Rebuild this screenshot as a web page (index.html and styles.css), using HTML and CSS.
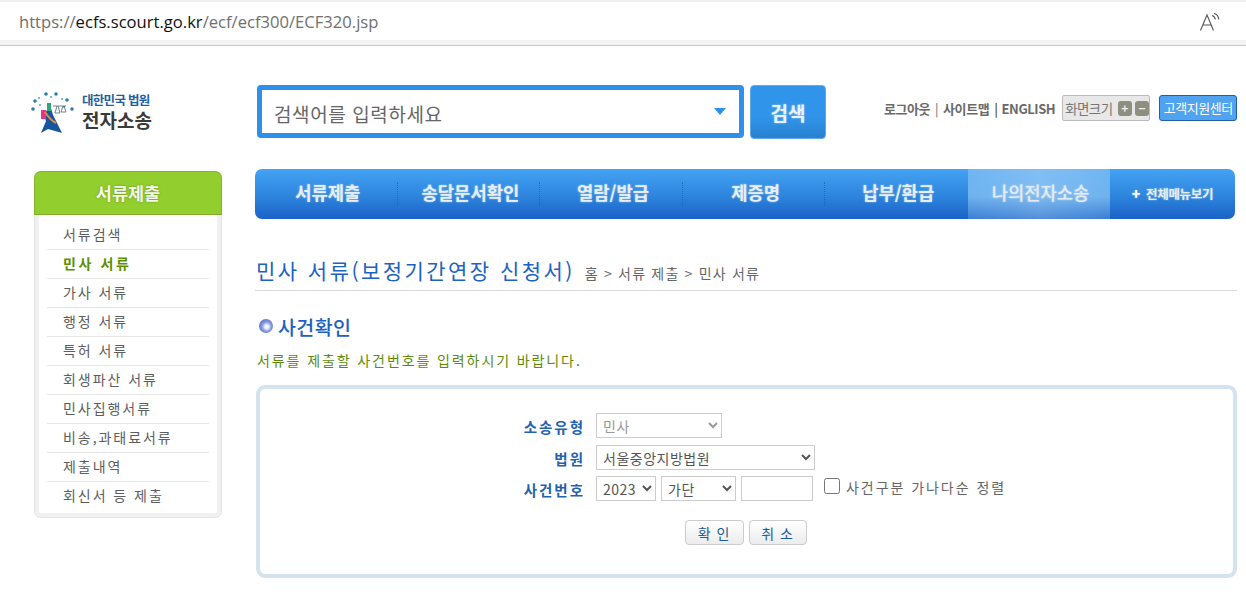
FILE: index.html
```html
<!DOCTYPE html>
<html lang="ko">
<head>
<meta charset="utf-8">
<title>전자소송</title>
<link rel="stylesheet" href="styles.css">
</head>
<body>
<div class="urlbar">
  <div class="url"><span class="dim">https://</span>ecfs.scourt.go.kr<span class="dim">/ecf/ecf300/ECF320.jsp</span></div>
  <svg class="read" width="22" height="20" viewBox="0 0 22 20" fill="none" stroke="#555" stroke-width="1.1">
    <path d="M1.5 18.5 L8 3 L14.5 18.5 M4 13 H12"/>
    <path d="M13 3.5 C15 4 16 5.5 16.3 7.5 M15 1.5 C18 2.2 19.5 4.5 19.8 7.5"/>
  </svg>
</div>
<header class="top">
  <div class="logo">
    <svg class="emblem" width="46" height="44" viewBox="0 0 46 44">
      <g fill="#2a7fa8">
        <circle cx="4" cy="18" r="1.8"/><circle cx="6" cy="10" r="1.8"/><circle cx="17" cy="3" r="1.8"/><circle cx="27" cy="3" r="1.8"/><circle cx="38" cy="9" r="1.8"/><circle cx="43" cy="18" r="1.8"/>
      </g>
      <g fill="#5aa0c0">
        <circle cx="10" cy="7" r="1"/><circle cx="22" cy="6" r="1"/><circle cx="33" cy="8" r="1"/><circle cx="11" cy="14" r="1"/><circle cx="35" cy="16" r="1"/>
      </g>
      <path d="M21 14 L24 24 L33 42 L19 38 L12 42 L17 30 L15 24 Z" fill="#17559f"/>
      <rect x="12" y="19" width="5" height="9" fill="#e0358f"/>
      <rect x="18" y="12" width="4" height="8" fill="#2aa87a"/>
      <path d="M16 21 Q21 29 27 32" stroke="#f08a24" stroke-width="2" fill="none"/>
      <path d="M24 15 H37 M28 15 L26 22 H31 L29 15 M34 15 L32 21 H37 L35 15" stroke="#4a6a7a" stroke-width=".8" fill="none"/>
    </svg>
    <div class="logo-text">
      <div class="logo-sub">대한민국 법원</div>
      <div class="logo-main">전자소송</div>
    </div>
  </div>
  <div class="searchbox"><span>검색어를 입력하세요</span><i class="caret"></i></div>
  <button class="searchbtn">검색</button>
  <div class="util">
    <a>로그아웃</a><span class="thin">|</span><a>사이트맵</a><span class="bar">|</span><a>ENGLISH</a>
    <div class="zoomer">화면크기<b>+</b><b>−</b></div>
    <div class="support">고객지원센터</div>
  </div>
</header>
<div class="columns">
  <aside class="side">
    <h2>서류제출</h2>
    <ul>
      <li>서류검색</li>
      <li class="on">민사 서류</li>
      <li>가사 서류</li>
      <li>행정 서류</li>
      <li>특허 서류</li>
      <li>회생파산 서류</li>
      <li>민사집행서류</li>
      <li>비송,과태료서류</li>
      <li>제출내역</li>
      <li>회신서 등 제출</li>
    </ul>
  </aside>
  <main class="main">
    <nav class="gnb">
      <a>서류제출</a><a>송달문서확인</a><a>열람/발급</a><a>제증명</a><a>납부/환급</a><a class="active">나의전자소송</a><a class="all"><b>+</b>전체메뉴보기</a>
    </nav>
    <div class="title">
      <h1>민사 서류(보정기간연장 신청서)</h1>
      <span class="crumb">홈 &gt; 서류 제출 &gt; 민사 서류</span>
    </div>
    <h3 class="sec"><i class="ball"></i>사건확인</h3>
    <p class="desc">서류를 제출할 사건번호를 입력하시기 바랍니다.</p>
    <section class="panel">
      <div class="form">
        <label>소송유형</label>
        <div class="field"><select class="s-type" disabled><option>민사</option></select></div>
        <label>법원</label>
        <div class="field"><select class="s-court"><option>서울중앙지방법원</option></select></div>
        <label>사건번호</label>
        <div class="field">
          <select class="s-year"><option>2023</option></select>
          <select class="s-kind"><option>가단</option></select>
          <input class="s-num" type="text">
          <input class="chk" type="checkbox" id="sort"><span class="chk-l">사건구분 가나다순 정렬</span>
        </div>
      </div>
      <div class="btns">
        <button class="btn b1">확 인</button>
        <button class="btn b2">취 소</button>
      </div>
    </section>
  </main>
</div>
</body>
</html>
```
FILE: styles.css
```css
* { box-sizing: border-box; }
html, body { margin: 0; padding: 0; height: 598px; overflow: hidden; background: #fff; }
body { font-family: "Noto Sans CJK KR", "Noto Sans", sans-serif; color: #555; }
ul, h1, h2, h3, p { margin: 0; padding: 0; }
li { list-style: none; }

.urlbar {
  height: 46px; display: flex; align-items: center; justify-content: space-between;
  padding: 0 25px 5px 19px;
  border-top: 2px solid #f0f0f0; border-bottom: 1px solid #c8c8c8;
  box-shadow: inset 0 -5px 0 #f3f3f3;
}
.url { font: 16.6px "Open Sans", sans-serif; color: #111; }
.dim { color: #6f6f6f; }
.read { margin-top: 1px; }

.top { display: flex; align-items: flex-start; height: 123px; padding-top: 39px; }
.logo { display: flex; align-items: center; width: 257px; height: 53px; padding-left: 29px; }
.emblem { flex: none; margin-top: 3px; filter: blur(.35px); }
.logo-text { margin-left: 7px; margin-top: 3px; }
.logo-sub { font-size: 12.5px; font-weight: 700; color: #1f5f9f; line-height: 15px; letter-spacing: -0.7px; margin-top: -2px; }
.logo-main { font-size: 19px; font-weight: 700; color: #3a3a3a; line-height: 24px; margin-top: 1px; }

.searchbox {
  width: 487px; height: 53px; border: 5px solid #2e90e8; border-radius: 4px;
  display: flex; align-items: center; justify-content: space-between;
  padding: 3px 13px 0 12px; font-size: 19px; color: #666; letter-spacing: 0.6px;
}
.caret { border: 6.5px solid transparent; border-top: 7px solid #2e90e8; border-bottom: 0; margin-top: -3px; }
.searchbtn {
  width: 76px; height: 54px; margin-left: 6px; padding: 0;
  border: 1px solid #5ea9e8; border-radius: 4px;
  background: linear-gradient(#2f94ea 60%, #2a80cf);
  color: #e8f2fb; font: 700 19px "Noto Sans CJK KR", sans-serif;
  text-shadow: 0 0 2px rgba(255,255,255,.6);
}
.util {
  display: flex; align-items: center; height: 26px; margin-top: 10px; margin-left: 58px;
  font-size: 13px; font-weight: 700; color: #6a6a6a; letter-spacing: -0.45px; white-space: nowrap;
}
.thin { margin: 0 5px; font-weight: 400; }
.bar { margin: 0 4px 0 5px; }
.zoomer {
  display: flex; align-items: center; width: 88px; height: 26px; margin-left: 7px; padding-left: 2px;
  background: #e8e8e8; border: 1px solid #bbb; border-radius: 2px;
  font-size: 13.5px; font-weight: 400; color: #777; letter-spacing: -0.6px;
}
.zoomer b {
  width: 15px; height: 15px; margin-left: 3px; background: #8f8f80; border-radius: 3px; color: #eee;
  font-size: 12px; line-height: 14px; text-align: center; letter-spacing: 0; font-weight: 700;
}
.zoomer b:first-of-type { margin-left: 5px; }
.support {
  width: 78px; height: 26px; margin-left: 9px; background: #4fa3f0; border: 1px solid #1f5fa8; border-radius: 3px;
  font-size: 13px; font-weight: 400; line-height: 23px; color: #fff; text-align: center; letter-spacing: -0.5px;
}

.columns { display: flex; align-items: flex-start; padding-left: 34px; }
.side {
  width: 188px; flex: none; margin-top: 2px; height: 347px;
  border: 1px solid #e4e4e4; border-top: 0; border-radius: 7px;
  box-shadow: inset 4px 0 0 #f0f0f0, inset -4px 0 0 #f0f0f0, inset 0 -4px 0 #f0f0f0;
}
.side h2 {
  height: 44px; margin: 0 -1px; border: 1px solid #84b52c; border-bottom-color: #7fae2b; border-radius: 7px 7px 0 0;
  background: #93ce2f; color: #f4f8ea; font-size: 17.5px; font-weight: 700; line-height: 41px; text-align: center;
  text-shadow: 0 0 2px rgba(60,90,0,.5);
}
.side ul { padding: 6px 12px 0; }
.side li {
  height: 29px; padding-left: 16px; border-bottom: 1px solid #e6e6e6;
  font-size: 14px; line-height: 27px; letter-spacing: 1.95px; color: #5d5d5d; white-space: nowrap;
}
.side li:last-child { border-bottom: 0; }
.side li.on { color: #5c8f00; font-weight: 700; letter-spacing: 2.6px; }

.main { width: 982px; margin-left: 33px; }
.gnb {
  display: flex; width: 980px; height: 50px; border-radius: 7px; overflow: hidden;
  background: linear-gradient(#43a3f4, #2d84dc 55%, #1b62c8);
}
.gnb a {
  position: relative; width: 142.6px; padding-left: 3px; text-align: center; line-height: 47px; font-size: 17.7px; font-weight: 700; color: #e6eef5;
  text-shadow: 0 0 2px rgba(255,255,255,.55); white-space: nowrap;
}
.gnb a::after {
  content: ""; position: absolute; right: 0; top: 13px; height: 24px;
  border-right: 1px dotted rgba(20,80,160,.55);
}
.gnb a.active {
  width: 142px; font-weight: 500; color: #e2ebf1;
  background: linear-gradient(90deg, rgba(255,255,255,0), rgba(255,255,255,.12) 50%, rgba(255,255,255,0)), linear-gradient(#6fb6f4, #6eb2ee 55%, #3c7fd4);
}
.gnb a.all { flex: 1; width: auto; padding-left: 0; font-size: 12.5px; letter-spacing: -0.3px; line-height: 48px; }
.gnb a.all b { color: #fff; font-size: 14px; margin-right: 6px; }
.gnb a:nth-child(n+5)::after { display: none; }

.title {
  display: flex; align-items: baseline; width: 982px; height: 53px; margin-top: 19px; padding: 19px 0 0 1px;
  border-bottom: 1px solid #d9d9d9; white-space: nowrap;
}
.title h1 { font-size: 21px; font-weight: 400; line-height: 27px; color: #1c62c0; letter-spacing: 2.45px; }
.crumb { margin-left: 10px; font-size: 14px; color: #666; letter-spacing: 1.2px; }

.sec {
  display: flex; align-items: center; height: 26px; margin-top: 22px; padding-left: 4px;
  font-size: 19.5px; font-weight: 500; color: #1c62c0; letter-spacing: 0.4px;
}
.ball {
  width: 14px; height: 14px; margin-right: 5px; border-radius: 50%;
  background: radial-gradient(circle at 55% 55%, #f4f6ff 0 15%, #7f95dc 45%, #4a5ea8 100%);
}
.desc { margin-top: 11px; padding-left: 2px; font-size: 14px; line-height: 20px; color: #5c8a0a; letter-spacing: 1.9px; white-space: nowrap; }

.panel {
  width: 981px; height: 193px; margin-top: 15px; margin-left: 1px;
  border: 4px solid #d4e3ed; border-radius: 9px; padding-top: 24px;
}
.form { display: grid; grid-template-columns: 325px auto; grid-template-rows: 26px 25px 25px; row-gap: 6px; justify-content: start; }
.form label {
  height: 25px; font-size: 14.5px; font-weight: 700; line-height: 28px; color: #1f62b0; text-align: right; letter-spacing: 2px;
}
.field { display: flex; align-items: flex-start; height: 25px; margin-left: 11px; }
select, input[type=text] {
  height: 25px; margin: 0; border: 1px solid #ccc; background: #fff; border-radius: 0;
  font: 14px "Noto Sans CJK KR", sans-serif; letter-spacing: 0.5px; color: #555; padding: 0 0 0 2px;
}
select:disabled { color: #999; opacity: 1; background: #fff; }
.s-type { width: 126px; }
.s-court { width: 219px; }
.s-year { width: 60px; padding-left: 2px; }
.s-kind { width: 75px; margin-left: 5px; }
input.s-num { width: 72px; margin-left: 5px; }
.chk { width: 16px; height: 16px; margin: 2px 0 0 11px; }
.chk-l { margin-left: 6px; font-size: 14px; line-height: 22px; letter-spacing: 1.95px; color: #666; white-space: nowrap; }

.btns { display: flex; justify-content: center; gap: 5px; margin-top: 19px; padding-right: 2px; }
.btn {
  height: 25px; padding: 0; border: 1px solid #ccc; border-radius: 4px;
  background: linear-gradient(#fff, #ececec);
  font: 14px "Noto Sans CJK KR", sans-serif; color: #1f5aa0; letter-spacing: 1px;
}
.b1 { width: 59px; }
.b2 { width: 58px; }
```
